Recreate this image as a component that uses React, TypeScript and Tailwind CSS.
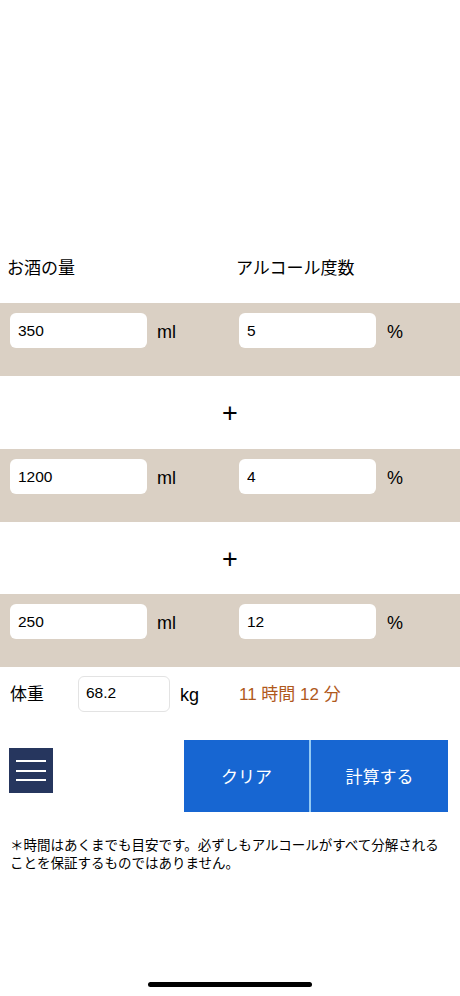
import { useState } from 'react';

const font = { fontFamily: '"Liberation Sans", "Noto Sans CJK JP", sans-serif' };

type Drink = { amount: string; percent: string };

function DrinkRow({ drink, onChange }: { drink: Drink; onChange: (d: Drink) => void }) {
  return (
    <div className="h-[73px] bg-[#dad0c4] flex items-start pt-[10px]">
      <input
        value={drink.amount}
        onChange={(e) => onChange({ ...drink, amount: e.target.value })}
        className="ml-[10px] w-[137px] h-[35px] rounded-[6px] bg-white px-[8px] text-[15.5px] text-black outline-none"
      />
      <span className="ml-[10px] w-[82px] h-[35px] pt-[3px] flex items-center text-[18px] text-black">ml</span>
      <input
        value={drink.percent}
        onChange={(e) => onChange({ ...drink, percent: e.target.value })}
        className="w-[137px] h-[35px] rounded-[6px] bg-white px-[8px] text-[15.5px] text-black outline-none"
      />
      <span className="ml-[11px] h-[35px] pt-[3px] flex items-center text-[18px] text-black">%</span>
    </div>
  );
}

function Plus({ h }: { h: string }) {
  return (
    <div className={`${h} flex items-center justify-center`}>
      <span className="text-[27px] font-normal text-black leading-none pt-[2px]">+</span>
    </div>
  );
}

export default function App() {
  const [drinks, setDrinks] = useState<Drink[]>([
    { amount: '350', percent: '5' },
    { amount: '1200', percent: '4' },
    { amount: '250', percent: '12' },
  ]);
  const [weight, setWeight] = useState('68.2');

  const update = (i: number, d: Drink) => setDrinks(drinks.map((x, j) => (j === i ? d : x)));

  return (
    <div className="w-[460px] h-[996px] bg-white relative overflow-hidden" style={font}>
      <div className="pt-[257px]">
        <div className="flex h-[24px] items-center text-[17px] text-black mb-[22px]">
          <span className="w-[236px] pl-[7px]">お酒の量</span>
          <span>アルコール度数</span>
        </div>

        <DrinkRow drink={drinks[0]} onChange={(d) => update(0, d)} />
        <Plus h="h-[73px]" />
        <DrinkRow drink={drinks[1]} onChange={(d) => update(1, d)} />
        <Plus h="h-[72px]" />
        <DrinkRow drink={drinks[2]} onChange={(d) => update(2, d)} />

        <div className="flex items-center pt-[9px] h-[45px]">
          <span className="pl-[10px] w-[78px] pt-[2px] text-[17px] text-black">体重</span>
          <input
            value={weight}
            onChange={(e) => setWeight(e.target.value)}
            className="w-[92px] h-[36px] rounded-[6px] border border-[#e3e3e3] bg-white px-[7px] pb-[3px] text-[15.5px] text-black outline-none"
          />
          <span className="ml-[10px] w-[59px] pt-[2px] text-[18px] text-black">kg</span>
          <span className="text-[17px] pt-[1px] text-[#b0591c]">11 時間 12 分</span>
        </div>

        <div className="flex items-start mt-[28px]">
          <button className="ml-[9px] mt-[8px] w-[44px] h-[45px] bg-[#26365e] flex flex-col items-center justify-center gap-[7.5px]">
            <span className="block w-[30px] h-[2px] bg-white" />
            <span className="block w-[30px] h-[2px] bg-white" />
            <span className="block w-[30px] h-[2px] bg-white" />
          </button>
          <div className="ml-[131px] flex h-[72px]">
            <button className="w-[125px] h-full pt-[3px] bg-[#1766d2] text-white text-[17px]">クリア</button>
            <div className="w-[2px] h-full bg-[#93c9f3]" />
            <button className="w-[137px] h-full pt-[3px] bg-[#1766d2] text-white text-[17px]">計算する</button>
          </div>
        </div>

        <p className="mt-[25px] px-[10px] text-[13.5px] leading-[18px] text-black">
          ＊時間はあくまでも目安です。必ずしもアルコールがすべて分解される
          <br />
          ことを保証するものではありません。
        </p>
      </div>

      <div className="absolute left-[148px] bottom-[9px] w-[164px] h-[5px] rounded-full bg-black" />
    </div>
  );
}
